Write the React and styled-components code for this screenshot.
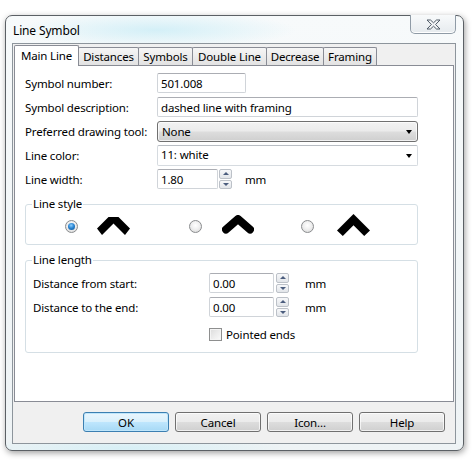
import React from 'react';
import styled, { createGlobalStyle } from 'styled-components';

const Global = createGlobalStyle`
  html, body { margin: 0; padding: 0; background: #ffffff; }
  body {
    font-family: "Noto Sans", "Open Sans", sans-serif;
    font-size: 11.5px;
    letter-spacing: -0.15px;
    color: #000;
  }
  #root { width: 476px; height: 464px; overflow: hidden; }
  * { box-sizing: border-box; }
`;

const Page = styled.div`
  width: 476px;
  height: 464px;
  padding: 15px 0 0 5px;
`;

const Window = styled.div`
  width: 459px;
  height: 436px;
  border: 1px solid #5b6065;
  border-radius: 7px;
  background:
    radial-gradient(ellipse 140px 18px at 150px 14px, rgba(200, 236, 246, 0.75), rgba(200, 236, 246, 0) 100%),
    radial-gradient(ellipse 160px 10px at 120px 432px, rgba(205, 238, 246, 0.7), rgba(205, 238, 246, 0) 100%),
    linear-gradient(#f7fafb, #eef3f5);
  box-shadow: 1px 2px 6px rgba(0, 0, 0, 0.38);
  padding: 0 7px 6px 6px;
  display: flex;
  flex-direction: column;
`;

const TitleBar = styled.div`
  height: 27px;
  display: flex;
  align-items: flex-start;
  justify-content: space-between;
`;

const Title = styled.div`
  padding: 7px 0 0 1px;
  font-size: 12px;
  line-height: 16px;
  color: #000;
`;

const CloseButton = styled.div`
  width: 46px;
  height: 19px;
  margin-top: -1px;
  border: 1px solid #8f9ba6;
  border-top: none;
  border-radius: 0 0 5px 5px;
  background: linear-gradient(#f8fafb, #e6ebee);
  display: flex;
  align-items: center;
  justify-content: center;
  box-shadow: inset 0 -1px 0 #ffffff;
`;

const Client = styled.div`
  flex: 1;
  border: 1px solid #8d959c;
  background: #f0f0f0;
  display: flex;
  flex-direction: column;
  padding: 1px 1px 0 1px;
`;

const TabRow = styled.div`
  height: 20px;
  display: flex;
  align-items: flex-end;
`;

const Tab = styled.div`
  position: relative;
  z-index: ${(p) => (p.$active ? 2 : 1)};
  width: ${(p) => p.$w}px;
  height: ${(p) => (p.$active ? 21 : 18)}px;
  margin-bottom: ${(p) => (p.$active ? -1 : 0)}px;
  margin-left: ${(p) => (p.$first ? 0 : -1)}px;
  border: 1px solid #898c95;
  border-bottom: none;
  border-radius: 2px 2px 0 0;
  background: ${(p) => (p.$active ? '#ffffff' : 'linear-gradient(#f6f6f6, #e2e2e2)')};
  display: flex;
  justify-content: center;
  align-items: center;
  padding-bottom: ${(p) => (p.$active ? 2 : 0)}px;
  padding-top: 1px;
  line-height: 14px;
  white-space: nowrap;
`;

const Panel = styled.div`
  height: 337px;
  border: 1px solid #898c95;
  background: #ffffff;
  padding: 7px 35px 0 10px;
  display: flex;
  flex-direction: column;
`;

const FormGrid = styled.div`
  display: grid;
  grid-template-columns: 132px 1fr;
  grid-auto-rows: 20px;
  row-gap: 4px;
  align-items: center;
`;

const Label = styled.div`
  line-height: 16px;
  padding-top: 1px;
  white-space: nowrap;
  padding-left: ${(p) => p.$indent || 0}px;
  width: ${(p) => (p.$w ? `${p.$w}px` : 'auto')};
  flex: none;
`;

const Cell = styled.div`
  display: flex;
  align-items: center;
  height: 20px;
`;

const TextBox = styled.div`
  width: ${(p) => (p.$w ? `${p.$w}px` : '100%')};
  height: 20px;
  border: 1px solid #d0d4d9;
  border-top-color: #abadb3;
  border-radius: 2px;
  background: #ffffff;
  padding: 1px 3px 0 3px;
  display: flex;
  align-items: center;
  line-height: 16px;
  flex: none;
`;

const DropButton = styled.div`
  width: 100%;
  height: 21px;
  border: 1px solid #707070;
  border-radius: 3px;
  background: linear-gradient(#f2f2f2 0%, #ebebeb 48%, #dddddd 52%, #cfcfcf 100%);
  box-shadow: inset 0 0 0 1px rgba(255, 255, 255, 0.7);
  padding: 1px 5px 0 4px;
  display: flex;
  align-items: center;
  justify-content: space-between;
  line-height: 16px;
`;

const ComboBox = styled.div`
  width: 100%;
  height: 21px;
  border: 1px solid #d6dbe0;
  border-top-color: #b9bec4;
  border-radius: 2px;
  background: #ffffff;
  padding: 0 5px 0 3px;
  display: flex;
  align-items: center;
  justify-content: space-between;
  line-height: 16px;
`;

const DownArrow = styled.span`
  width: 0;
  height: 0;
  border-left: 3.5px solid transparent;
  border-right: 3.5px solid transparent;
  border-top: 4px solid #000;
  margin-top: ${(p) => p.$mt || 0}px;
`;

const Spin = styled.div`
  width: 13px;
  height: 20px;
  margin-left: ${(p) => p.$gap}px;
  display: flex;
  flex-direction: column;
  gap: 1px;
  flex: none;
`;

const SpinBtn = styled.div`
  flex: 1;
  border: 1px solid #bcc1c8;
  border-radius: 2px;
  background: linear-gradient(#f7f8fa, #e2e5e9);
  display: flex;
  align-items: center;
  justify-content: center;
`;

const SpinArrow = styled.span`
  width: 0;
  height: 0;
  border-left: 3px solid transparent;
  border-right: 3px solid transparent;
  ${(p) => (p.$up ? 'border-bottom: 3px solid #4b5d7e;' : 'border-top: 3px solid #4b5d7e;')}
`;

const Unit = styled.div`
  margin-left: ${(p) => p.$gap}px;
  line-height: 16px;
  padding-top: 1px;
`;

const Group = styled.fieldset`
  margin: 8px 0 0 0;
  border: 1px solid #d5dfe5;
  border-radius: 3px;
  padding: 0 8px 8px 6px;
  min-width: 0;
`;

const Legend = styled.legend`
  padding: 0 1px;
  font-size: 11.5px;
  line-height: 14px;
`;

const RadioRow = styled.div`
  display: flex;
  align-items: center;
  height: 20px;
  margin-top: 5px;
  padding-left: 33px;
`;

const RadioOption = styled.div`
  display: flex;
  align-items: center;
  width: ${(p) => (p.$w ? `${p.$w}px` : 'auto')};
  flex: none;
`;

const Radio = styled.div`
  width: 13px;
  height: 13px;
  border-radius: 50%;
  border: 1px solid #8a8c8e;
  background: radial-gradient(circle at 50% 40%, #ffffff 0%, #f0f0f0 45%, #d4d4d4 100%);
  display: flex;
  align-items: center;
  justify-content: center;
  flex: none;
`;

const RadioDot = styled.div`
  width: 7px;
  height: 7px;
  border-radius: 50%;
  background: radial-gradient(circle at 45% 35%, #8fd0ff 0%, #2b86d3 45%, #0f4f8c 100%);
`;

const Chevron = styled.svg`
  margin-left: ${(p) => p.$gap}px;
  margin-top: ${(p) => p.$dy || 0}px;
  flex: none;
  display: block;
`;

const LengthRows = styled.div`
  display: flex;
  flex-direction: column;
  gap: 4px;
  margin-top: 6px;
`;

const Row = styled.div`
  display: flex;
  align-items: center;
  height: 20px;
  margin-top: ${(p) => p.$mt || 0}px;
`;

const CheckBox = styled.div`
  width: 13px;
  height: 13px;
  border: 1px solid #8e8f8f;
  background: linear-gradient(135deg, #dcdcdc, #fbfbfb);
  box-shadow: inset 0 0 0 1px #f4f4f4;
  margin-left: ${(p) => p.$ml}px;
  flex: none;
`;

const CheckLabel = styled.div`
  margin-left: 4px;
  line-height: 16px;
  padding-top: 1px;
`;

const ButtonRow = styled.div`
  height: 41px;
  padding: 10px 9px 0 0;
  display: flex;
  justify-content: flex-end;
  align-items: flex-start;
  gap: 6px;
`;

const Button = styled.div`
  width: 86px;
  height: 20px;
  border: 1px solid ${(p) => (p.$default ? '#3c7fb1' : '#707070')};
  border-radius: 3px;
  background: ${(p) =>
    p.$default
      ? 'linear-gradient(#eaf6fd 0%, #d9f0fc 48%, #bee6fd 52%, #a7d9f5 100%)'
      : 'linear-gradient(#f2f2f2 0%, #ebebeb 48%, #dddddd 52%, #cfcfcf 100%)'};
  box-shadow: ${(p) => (p.$default ? 'inset 0 0 0 1px #bfe6fb' : 'inset 0 0 0 1px rgba(255,255,255,0.7)')};
  display: flex;
  align-items: center;
  justify-content: center;
  line-height: 14px;
  padding-top: 1px;
`;

const SpinBox = ({ gap }) => (
  <Spin $gap={gap}>
    <SpinBtn><SpinArrow $up /></SpinBtn>
    <SpinBtn><SpinArrow /></SpinBtn>
  </Spin>
);

const tabs = [
  { label: 'Main Line', w: 65, active: true },
  { label: 'Distances', w: 61 },
  { label: 'Symbols', w: 55 },
  { label: 'Double Line', w: 75 },
  { label: 'Decrease', w: 58 },
  { label: 'Framing', w: 54 },
];

export default function App() {
  return (
    <Page>
      <Global />
      <Window>
        <TitleBar>
          <Title>Line Symbol</Title>
          <CloseButton>
            <svg width="15" height="11" viewBox="-1 -1 15 11">
              <polygon
                points="0,0 3.5,0 6.5,2.8 9.5,0 13,0 8.6,4.5 13,9 9.5,9 6.5,6.2 3.5,9 0,9 4.4,4.5"
                fill="#f3f5f7"
                stroke="#4e5a66"
                strokeWidth="1"
                strokeLinejoin="round"
              />
            </svg>
          </CloseButton>
        </TitleBar>
        <Client>
          <TabRow>
            {tabs.map((t, i) => (
              <Tab key={t.label} $w={t.w} $active={t.active} $first={i === 0}>
                {t.label}
              </Tab>
            ))}
          </TabRow>
          <Panel>
            <FormGrid>
              <Label>Symbol number:</Label>
              <Cell><TextBox $w={89}>501.008</TextBox></Cell>
              <Label>Symbol description:</Label>
              <Cell><TextBox>dashed line with framing</TextBox></Cell>
              <Label>Preferred drawing tool:</Label>
              <Cell><DropButton><span>None</span><DownArrow /></DropButton></Cell>
              <Label>Line color:</Label>
              <Cell><ComboBox><span>11: white</span><DownArrow $mt={2} /></ComboBox></Cell>
              <Label>Line width:</Label>
              <Cell>
                <TextBox $w={61}>1.80</TextBox>
                <SpinBox gap={1} />
                <Unit $gap={13}>mm</Unit>
              </Cell>
            </FormGrid>

            <Group>
              <Legend>Line style</Legend>
              <RadioRow>
                <RadioOption $w={124}>
                  <Radio><RadioDot /></Radio>
                  <Chevron $gap={19} width="33" height="18" viewBox="0 0 33 18">
                    <polygon points="11.5,0 21.5,0 33,11.5 28,18 16.5,6.5 5,18 0,11.5" fill="#000" />
                  </Chevron>
                </RadioOption>
                <RadioOption $w={112}>
                  <Radio />
                  <Chevron $gap={20} $dy={-4} width="32" height="19" viewBox="0 0 32 19">
                    <polyline points="4,14.5 16,4 28,14.5" fill="none" stroke="#000" strokeWidth="8" strokeLinejoin="round" strokeLinecap="round" />
                  </Chevron>
                </RadioOption>
                <RadioOption>
                  <Radio />
                  <Chevron $gap={23} $dy={-3} width="33" height="22" viewBox="0 0 33 22">
                    <polygon points="16.5,0 33,16.5 27.2,22 16.5,11.3 5.8,22 0,16.5" fill="#000" />
                  </Chevron>
                </RadioOption>
              </RadioRow>
            </Group>

            <Group>
              <Legend>Line length</Legend>
              <LengthRows>
                <Row>
                  <Label $w={177} $indent={1}>Distance from start:</Label>
                  <TextBox $w={65}>0.00</TextBox>
                  <SpinBox gap={2} />
                  <Unit $gap={16}>mm</Unit>
                </Row>
                <Row>
                  <Label $w={177} $indent={1}>Distance to the end:</Label>
                  <TextBox $w={65}>0.00</TextBox>
                  <SpinBox gap={2} />
                  <Unit $gap={16}>mm</Unit>
                </Row>
                <Row $mt={3}>
                  <CheckBox $ml={177} />
                  <CheckLabel>Pointed ends</CheckLabel>
                </Row>
              </LengthRows>
            </Group>
          </Panel>
          <ButtonRow>
            <Button $default>OK</Button>
            <Button>Cancel</Button>
            <Button>Icon...</Button>
            <Button>Help</Button>
          </ButtonRow>
        </Client>
      </Window>
    </Page>
  );
}
